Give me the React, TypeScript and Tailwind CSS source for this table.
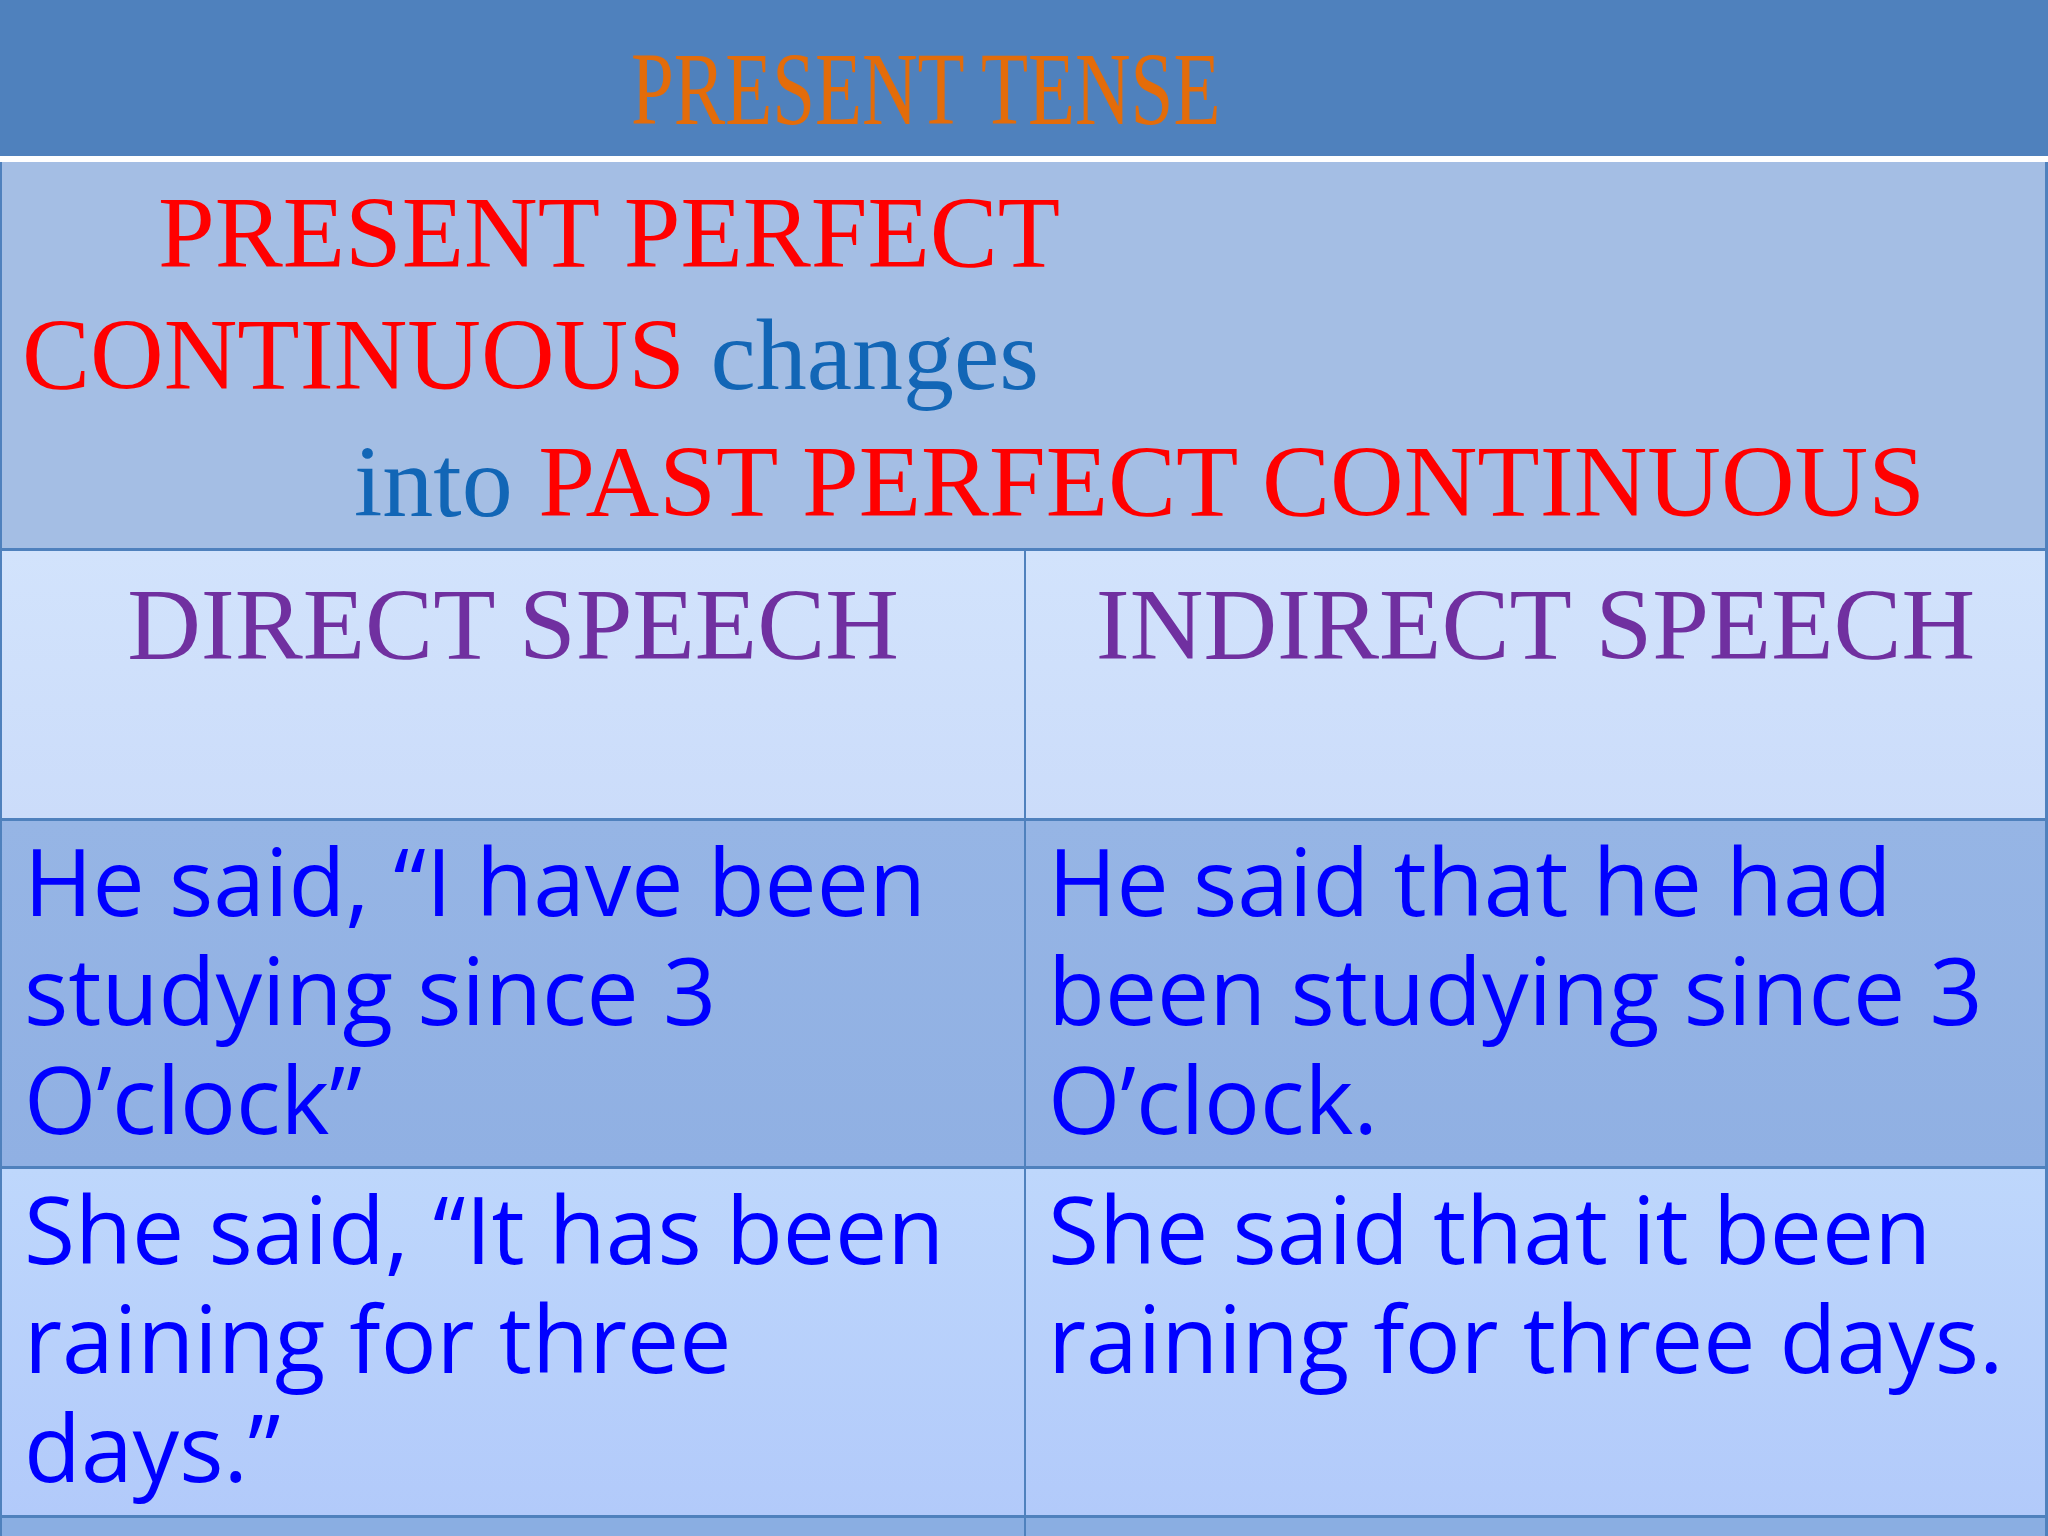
import React from 'react';

const serif = "font-['Liberation_Serif','Times_New_Roman',serif]";
const comic = "font-['Comic_Sans_MS','Open_Sans',sans-serif]";

const rows = [
  {
    bg: 'bg-gradient-to-b from-[#96b5e5] to-[#90b0e3]',
    h: 'h-[348px]',
    left: ['He said, \u201cI have been', 'studying since 3', 'O\u2019clock\u201d'],
    right: ['He said that he had', 'been studying since 3', 'O\u2019clock.'],
  },
  {
    bg: 'bg-gradient-to-b from-[#bed7fc] to-[#b2cafa]',
    h: 'h-[349px]',
    left: ['She said, \u201cIt has been', 'raining for three', 'days.\u201d'],
    right: ['She said that it been', 'raining for three days.'],
  },
];

function Lines({ lines }: { lines: string[] }) {
  return (
    <div className={`${comic} text-[93px] leading-[109px] text-[#0000ff] whitespace-nowrap pl-[22px] pt-[5px]`}>
      {lines.map((l, i) => (
        <div key={i}>{l}</div>
      ))}
    </div>
  );
}

export default function App() {
  return (
    <div className="w-[2048px] h-[1536px] overflow-hidden bg-[#8aaee2] flex flex-col">
      {/* slide title bar */}
      <div className="h-[156px] shrink-0 bg-[#4f81bd] pl-[631px] pt-[37px]">
        <div className={`${serif} text-[104px] leading-[104px] text-[#e36c0a] whitespace-nowrap origin-left scale-x-[0.74] w-fit`}>
          PRESENT TENSE
        </div>
      </div>
      <div className="h-[6px] shrink-0 bg-white" />

      {/* rule */}
      <div className={`h-[386px] shrink-0 bg-[#a4bee4] border-l-2 border-r-[3px] border-[#4f81bd] ${serif} text-[102px] leading-[122px] whitespace-nowrap pt-[10px]`}>
        <div className="pl-[156px] text-[#ff0000]">PRESENT PERFECT</div>
        <div className="pl-[20px]">
          <span className="text-[#ff0000]">CONTINUOUS</span> <span className="text-[#1266b6]">changes</span>
        </div>
        <div className="pl-[352px] mt-[5px]">
          <span className="text-[#1266b6]">into</span> <span className="text-[#ff0000]">PAST PERFECT CONTINUOUS</span>
        </div>
      </div>

      {/* table */}
      <div className="flex flex-col flex-1 border-l-2 border-r-[3px] border-[#4f81bd]">
        <div className="h-[270px] shrink-0 grid grid-cols-[1022px_1fr] border-t-[3px] border-[#4f81bd] bg-gradient-to-b from-[#d2e3fc] to-[#cbdcfa]">
          {['DIRECT SPEECH', 'INDIRECT SPEECH'].map((t, i) => (
            <div
              key={t}
              className={`${serif} text-[102px] leading-[122px] text-[#7030a0] text-center whitespace-nowrap pt-[13px] ${i === 1 ? 'border-l-2 border-[#4f81bd]' : ''}`}
            >
              {t}
            </div>
          ))}
        </div>

        {rows.map((r, idx) => (
          <div key={idx} className={`${r.h} shrink-0 grid grid-cols-[1022px_1fr] border-t-[3px] border-[#4f81bd] ${r.bg}`}>
            <Lines lines={r.left} />
            <div className="border-l-2 border-[#4f81bd]">
              <Lines lines={r.right} />
            </div>
          </div>
        ))}

        <div className="flex-1 grid grid-cols-[1022px_1fr] border-t-[3px] border-[#4f81bd] bg-[#8aaee2]">
          <div />
          <div className="border-l-2 border-[#4f81bd]" />
        </div>
      </div>
    </div>
  );
}
